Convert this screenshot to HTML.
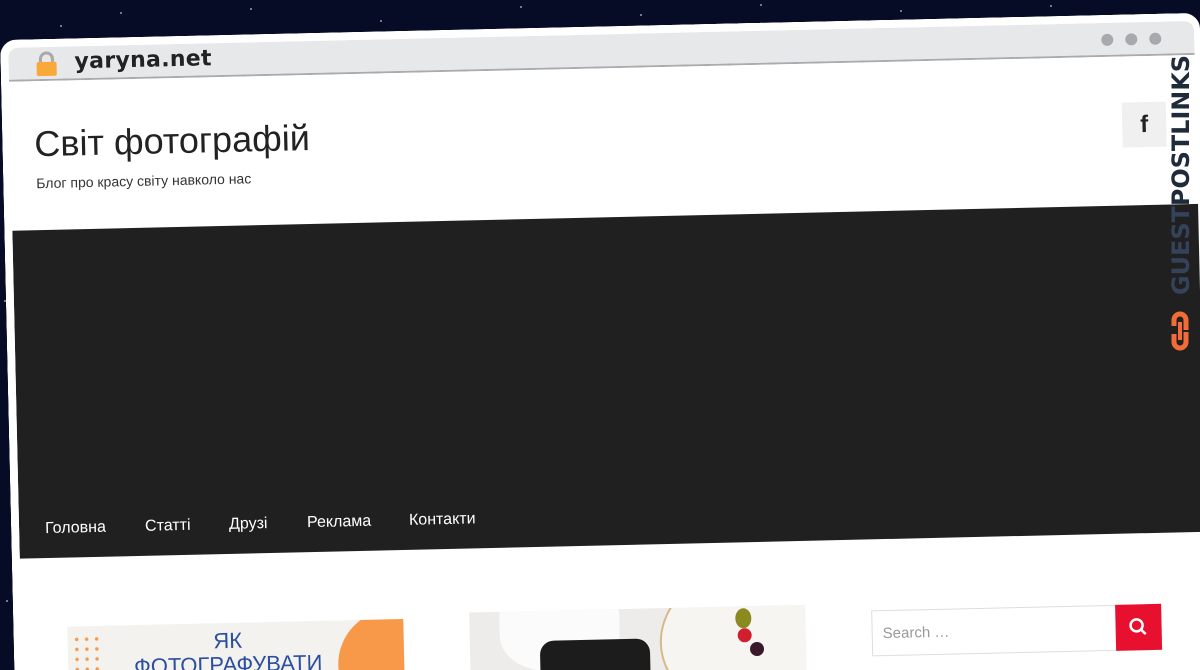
<!DOCTYPE html>
<html><head><meta charset="utf-8"><style>
*{margin:0;padding:0;box-sizing:border-box}
html,body{width:1200px;height:670px;overflow:hidden}
body{background:#070c26;font-family:"Liberation Sans",sans-serif;position:relative}
.star{position:absolute;width:2px;height:2px;background:#cfd6ff;border-radius:50%;opacity:.7}
#win{position:absolute;left:0;top:40px;width:1200px;height:690px;transform:rotate(-1.3deg);transform-origin:0 0;background:#fff;border-radius:16px 16px 0 0;border:8px solid #fff;border-bottom:0;border-right:6px solid #fff;overflow:hidden}
#bar{position:absolute;left:0;top:0;right:0;height:34px;background:#e7e8ea;border-radius:10px 10px 0 0;border-bottom:2px solid #a9abae}
.dot{position:absolute;top:11px;width:12px;height:12px;border-radius:50%;background:#a8a9ac}
#url{position:absolute;left:66px;top:3px;font-size:22px;font-weight:bold;color:#222;font-family:"DejaVu Sans","Liberation Sans",sans-serif;letter-spacing:.3px}
#lock{position:absolute;left:27px;top:4px;width:22px;height:26px}
h1{position:absolute;left:24px;top:76px;font-weight:normal;font-size:36px;color:#222}
.tag{position:absolute;left:25px;top:128px;font-size:14px;color:#333}
#fb{position:absolute;left:1112px;top:80px;width:44px;height:45px;background:#f0f0f0;font-size:24px;font-weight:bold;text-align:center;line-height:45px;color:#222}
#hero{position:absolute;left:0;top:183px;width:1200px;height:328px;background:#202020}
.nav{position:absolute;top:290px;font-size:16px;color:#fff}
#search{position:absolute;left:850px;top:582px;width:245px;height:46px;border:1px solid #ddd;background:#fff;color:#999;font-size:15px;padding:14px 10px}
#sbtn{position:absolute;left:1094px;top:582px;width:46px;height:46px;background:#e8102f}
#img1{position:absolute;left:46px;top:580px;width:336px;height:90px;background:#f4f2ef;overflow:hidden}
#img2{position:absolute;left:448px;top:575px;width:336px;height:90px;background:#eeeceb;overflow:hidden}
#wm{position:absolute;left:1160px;top:50px;width:40px;height:305px}
</style></head><body>
<div class="star" style="left:120px;top:12px"></div><div class="star" style="left:250px;top:8px"></div><div class="star" style="left:380px;top:20px"></div><div class="star" style="left:520px;top:6px"></div><div class="star" style="left:640px;top:14px"></div><div class="star" style="left:760px;top:4px"></div><div class="star" style="left:900px;top:10px"></div><div class="star" style="left:1050px;top:5px"></div><div class="star" style="left:60px;top:25px"></div><div class="star" style="left:4px;top:300px"></div><div class="star" style="left:6px;top:600px"></div>
<div id="win">
<div id="bar">
<svg id="lock" viewBox="0 0 22 26"><path d="M5 12V8a6 6 0 0 1 12 0v4" fill="none" stroke="#a9a9a9" stroke-width="3"/><rect x="1" y="11" width="20" height="14" rx="2" fill="#f8a93a"/></svg>
<div id="url">yaryna.net</div>
<div class="dot" style="left:1093px"></div><div class="dot" style="left:1117px"></div><div class="dot" style="left:1141px"></div>
</div>
<h1>Світ фотографій</h1>
<div class="tag">Блог про красу світу навколо нас</div>
<div id="fb">f</div>
<div id="hero">
<div class="nav" style="left:26px">Головна</div>
<div class="nav" style="left:126px">Статті</div>
<div class="nav" style="left:210px">Друзі</div>
<div class="nav" style="left:288px">Реклама</div>
<div class="nav" style="left:390px">Контакти</div>
</div>
<div id="img1">
<div style="position:absolute;left:4px;top:8px;width:30px;height:60px;background:radial-gradient(circle,#f59a4a 1.5px,transparent 2px) 0 0/10px 10px"></div>
<div style="position:absolute;left:270px;top:-10px;width:110px;height:110px;border-radius:50%;background:#f8994a"></div>
<div style="position:absolute;left:60px;top:6px;width:200px;text-align:center;color:#2b4fa0;font-size:22px;line-height:24px">ЯК<br>ФОТОГРАФУВАТИ</div>
</div>
<div id="img2">
<div style="position:absolute;left:30px;top:-30px;width:120px;height:90px;background:#fbfbfb;border-radius:40%"></div>
<div style="position:absolute;left:70px;top:30px;width:110px;height:70px;background:#1c1c1c;border-radius:14px"></div>
<div style="position:absolute;left:190px;top:-40px;width:180px;height:150px;border-radius:50%;background:#f7f5f1;border:2px solid #d6b98a"></div>
<div style="position:absolute;left:266px;top:2px;width:16px;height:20px;border-radius:50%;background:#8a8a20"></div>
<div style="position:absolute;left:268px;top:22px;width:14px;height:14px;border-radius:50%;background:#d0202e"></div>
<div style="position:absolute;left:280px;top:36px;width:14px;height:14px;border-radius:50%;background:#3a1a2a"></div>
</div>
<div id="search">Search …</div>
<div id="sbtn"><svg width="46" height="46" viewBox="0 0 46 46"><circle cx="21" cy="21" r="6" fill="none" stroke="#fff" stroke-width="2.5"/><path d="M25 25l5 5" stroke="#fff" stroke-width="2.5"/></svg></div>
</div>
<svg id="wm" viewBox="0 0 40 305"><text transform="translate(29,245) rotate(-90)" font-family="DejaVu Sans,Liberation Sans,sans-serif" font-weight="bold" font-size="24" textLength="240" lengthAdjust="spacingAndGlyphs"><tspan fill="#34435a">GUEST</tspan><tspan fill="#1f2b3a">POSTLINKS</tspan></text><path d="M14 276v-6a6 6 0 0 1 12 0v10M26 282v10a6 6 0 0 1-12 0v-8" fill="none" stroke="#f26b38" stroke-width="5"/><path d="M20 272v18" stroke="#f26b38" stroke-width="4"/></svg>
</body></html>
